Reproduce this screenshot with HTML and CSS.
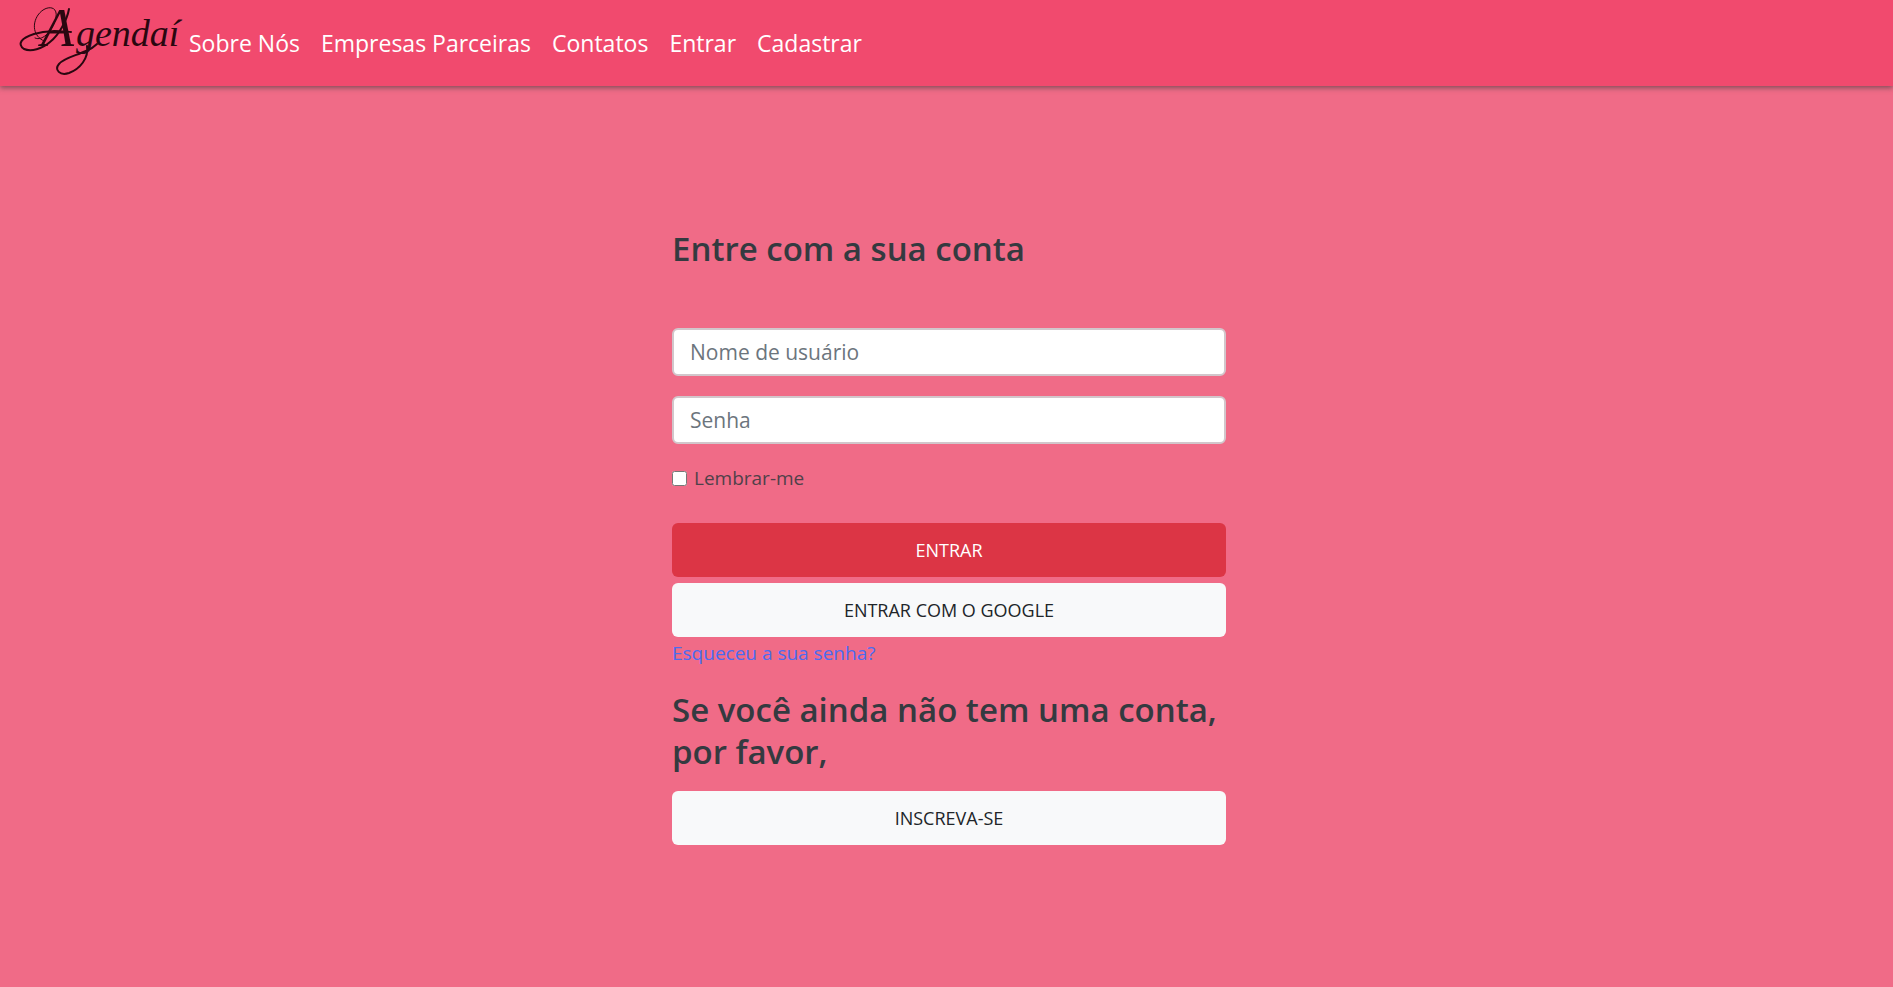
FILE: index.html
```html
<!DOCTYPE html>
<html lang="pt-BR">
<head>
<meta charset="utf-8">
<meta name="viewport" content="width=device-width, initial-scale=1">
<title>Agendaí - Entrar</title>
<link rel="stylesheet" href="styles.css">
</head>
<body>
<header class="navbar">
  <a class="brand" href="#">
    <svg class="brand-logo" viewBox="0 7 162 72" width="162" height="72" role="img" aria-label="Agendaí">
      <g class="flourish">
        <path d="M51 9C49 20 41 35 32 42C24 49 13 52 6 49C-1 44 3 38 16 34C30 30 40 31 53 32" />
        <path class="thin" d="M26 41C15 36 14 24 20 15C27 5 40 5 38 17C36 29 25 42 17 38" />
        <path d="M69 46C71 58 62 69 51 73C42 76 36 70 41 64C46 58 57 56 68 51C73 49 76 47 79 44" />
      </g>
      <text class="letters" y="46"><tspan class="capital" x="23">A</tspan><tspan class="small" x="58">gendaí</tspan></text>
    </svg>
  </a>
  <nav class="nav-links">
    <a href="#">Sobre Nós</a>
    <a href="#">Empresas Parceiras</a>
    <a href="#">Contatos</a>
    <a href="#">Entrar</a>
    <a href="#">Cadastrar</a>
  </nav>
</header>
<main class="page">
  <form class="login">
    <h1 class="title">Entre com a sua conta</h1>
    <input class="field" type="text" placeholder="Nome de usuário" aria-label="Nome de usuário">
    <input class="field" type="password" placeholder="Senha" aria-label="Senha">
    <div class="remember">
      <input id="remember" type="checkbox">
      <label for="remember">Lembrar-me</label>
    </div>
    <div class="actions">
      <button class="btn btn-danger" type="submit">ENTRAR</button>
      <button class="btn btn-light" type="button">ENTRAR COM O GOOGLE</button>
    </div>
    <a class="forgot" href="#">Esqueceu a sua senha?</a>
    <h2 class="title signup">Se você ainda não tem uma conta, por favor,</h2>
    <button class="btn btn-light" type="button">INSCREVA-SE</button>
  </form>
</main>
</body>
</html>
```
FILE: styles.css
```css
* { box-sizing: border-box; }
body {
  margin: 0;
  min-height: 100vh;
  background: #f06b87;
  color: #343a40;
  font-family: "Open Sans", "Noto Sans", sans-serif;
  font-size: 19px;
  line-height: 28px;
}
.navbar {
  display: flex;
  align-items: center;
  gap: 9px;
  height: 86px;
  padding: 0 18px;
  background: #f14a6e;
  box-shadow: 0 2px 5px rgba(60, 60, 60, .6);
}
.brand { display: block; height: 72px; }
.brand-logo { display: block; overflow: visible; }
.flourish { fill: none; stroke: #2a0710; stroke-width: 2; stroke-linecap: round; }
.flourish .thin { stroke-width: 1; }
.letters { fill: #2a0710; font-family: "Liberation Serif", serif; font-style: italic; }
.capital { font-size: 54px; }
.small { font-size: 38px; }
.nav-links { display: flex; flex-wrap: wrap; gap: 21px; }
.nav-links a { color: #fff; font-size: 23px; line-height: 36px; text-decoration: none; }
.page { padding: 142px 16px 48px 21px; }
.login { display: flex; flex-direction: column; max-width: 554px; margin: 0 auto; }
.title { margin: 0 0 58px; font-size: 33px; line-height: 42px; font-weight: 600; }
.field {
  width: 100%;
  height: 48px;
  margin: 0 0 20px;
  padding: 0 16px;
  border: 2px solid #d2c6cb;
  border-radius: 6px;
  background: #fff;
  color: #495057;
  font: 21px/32px "Open Sans", "Noto Sans", sans-serif;
}
.field::placeholder { color: #6c757d; opacity: 1; }
.remember { display: flex; align-items: center; gap: 7px; margin-bottom: 31px; }
.remember label { opacity: .85; }
.remember input { width: 15px; height: 15px; margin: 0; }
.actions { display: grid; gap: 6px; }
.btn {
  width: 100%;
  height: 54px;
  padding: 0 16px;
  border: 0;
  border-radius: 6px;
  font: 18px/26px "Open Sans", "Noto Sans", sans-serif;
}
.btn-danger { background: #dc3545; color: #fff; }
.btn-light { background: #f8f9fa; color: #212529; }
.forgot { align-self: flex-start; margin-top: 2px; color: #4b6cf0; text-decoration: none; }
.signup { margin: 22px 0 18px; }
```
